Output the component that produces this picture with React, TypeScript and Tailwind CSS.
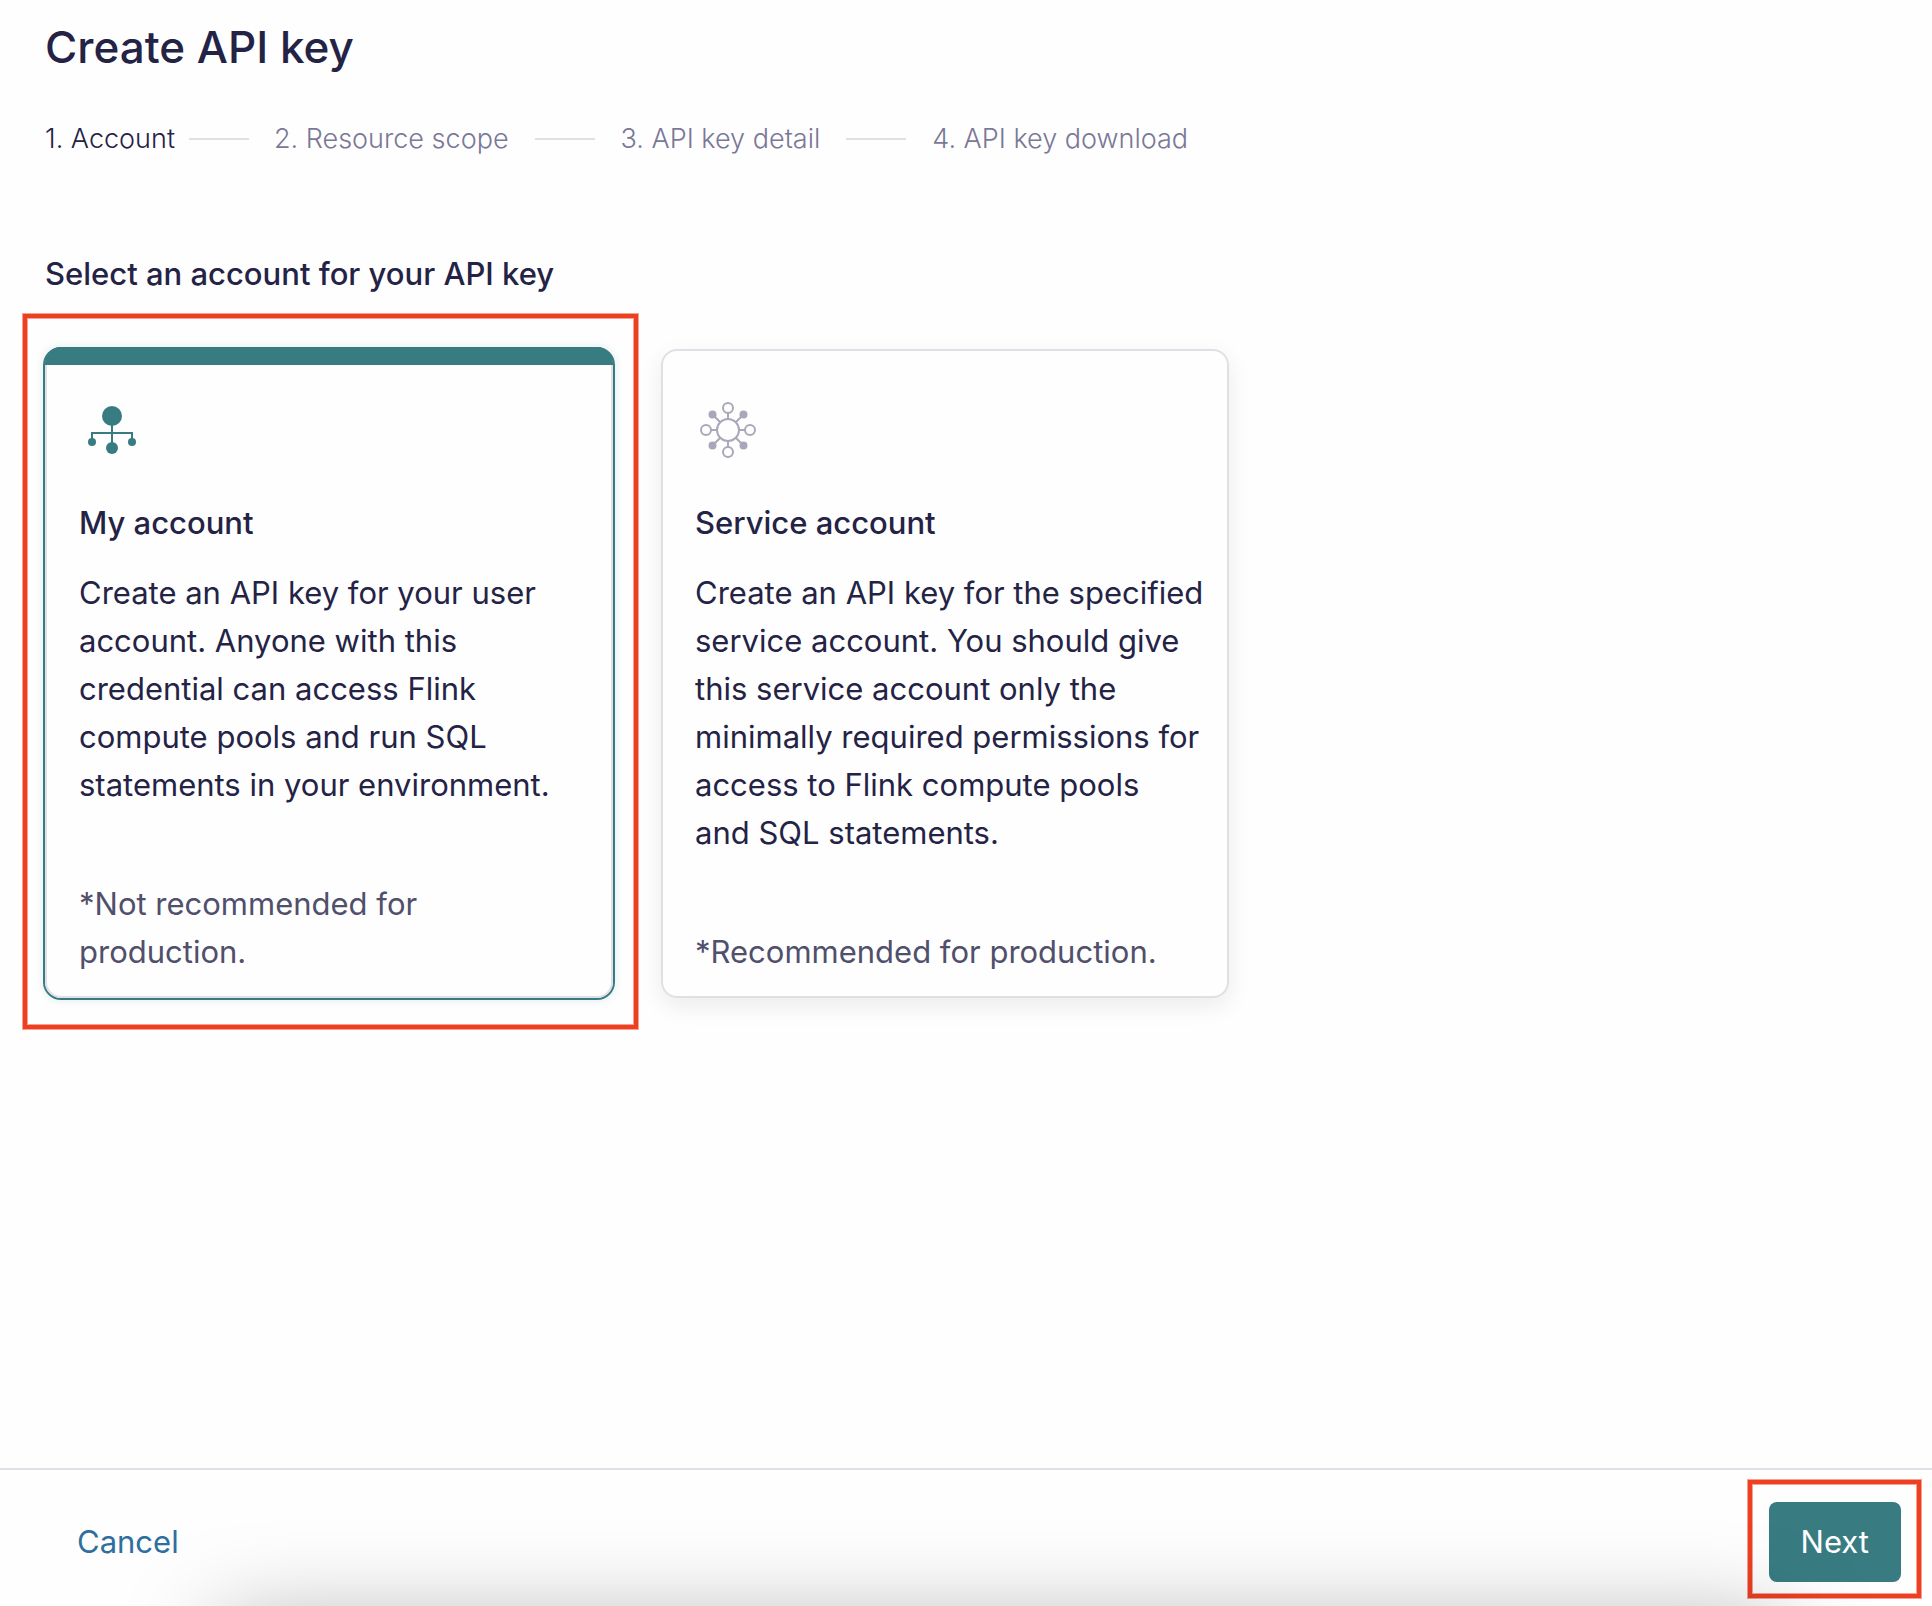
import { useState } from "react";
import type { ReactNode } from "react";

const steps = ["Account", "Resource scope", "API key detail", "API key download"];

function UserAccountIcon() {
  return (
    <svg viewBox="0 0 64 64" className="size-16" fill="#387c82" stroke="#387c82" strokeWidth="2" aria-hidden="true">
      <path d="M33 18V50M13 42V34H53V42" fill="none" />
      <circle cx="33" cy="17" r="10" stroke="none" />
      <circle cx="33" cy="49" r="6" stroke="none" />
      <circle cx="13" cy="43" r="4" stroke="none" />
      <circle cx="53" cy="43" r="4" stroke="none" />
    </svg>
  );
}

function ServiceAccountIcon() {
  return (
    <svg viewBox="0 0 64 64" className="size-16" fill="none" stroke="#a9a8ba" strokeWidth="2" aria-hidden="true">
      <circle cx="33" cy="31" r="11" />
      <circle cx="33" cy="9" r="5" />
      <circle cx="33" cy="53" r="5" />
      <circle cx="11" cy="31" r="5" />
      <circle cx="55" cy="31" r="5" />
      <path d="M33 14V20M33 42V48M16 31H22M44 31H50M18 16L25.500 23.500M48 16L40.500 23.500M18 46L25.500 38.500M48 46L40.500 38.500" />
      <g fill="#a9a8ba" stroke="none">
        <circle cx="17.500" cy="15.500" r="4" />
        <circle cx="48.500" cy="15.500" r="4" />
        <circle cx="17.500" cy="46.500" r="4" />
        <circle cx="48.500" cy="46.500" r="4" />
      </g>
    </svg>
  );
}

function Highlight({ className }: { className: string }) {
  return (
    <div
      aria-hidden="true"
      className={`pointer-events-none absolute border-4 border-[#ed4023] shadow-[0_0_0_1px_#f6a191,inset_0_0_0_1px_#f6a191] ${className}`}
    />
  );
}

type CardProps = {
  value: string;
  title: string;
  text: string;
  note: string;
  icon: ReactNode;
  selected: boolean;
  onSelect: (value: string) => void;
};

function AccountCard({ value, title, text, note, icon, selected, onSelect }: CardProps) {
  return (
    <label
      className={`relative flex h-full cursor-pointer flex-col rounded-2xl border-2 border-[#e0dfe6] pt-12 pr-5 pb-5 pl-8 ${
        selected
          ? "shadow-[0_0_0_2px_#387c82,0_0_8px_2px_rgba(56,124,130,0.15)]"
          : "shadow-[0_8px_24px_rgba(0,0,0,0.08)]"
      }`}
    >
      {selected && <span className="absolute -inset-x-0.5 -top-1 h-[18px] rounded-t-2xl bg-[#387c82]" />}
      <input
        type="radio"
        name="account"
        value={value}
        checked={selected}
        onChange={() => onSelect(value)}
        className="sr-only"
      />
      {icon}
      <span className="mt-9 font-medium">{title}</span>
      <span className="mt-[22px]">{text}</span>
      <span className="mt-[71px] text-[#504f6c]">{note}</span>
    </label>
  );
}

export default function App() {
  const [account, setAccount] = useState("user");

  return (
    <div className="flex min-h-screen flex-col bg-[#fefefe] font-['Inter',sans-serif] text-[31px] leading-[48px] text-[#242346]">
      <main className="flex-1 px-[45px] pt-[19px]">
        <h1 className="text-[44px] leading-14 font-medium">Create API key</h1>
        <ol className="mt-11 flex items-center text-[27px] leading-10 font-light">
          {steps.map((step, i) => (
            <li
              key={step}
              aria-current={i === 0 ? "step" : undefined}
              className={i === 0 ? "flex items-center" : "flex items-center text-[#7a7896]"}
            >
              {i > 0 && (
                <span
                  className={i === 1 ? "mr-[25px] ml-[14px] h-0.5 w-15 bg-[#e0dfe6]" : "mx-[26px] h-0.5 w-15 bg-[#e0dfe6]"}
                />
              )}
              {i + 1}. {step}
            </li>
          ))}
        </ol>
        <fieldset className="mt-[91px]">
          <legend className="font-medium">Select an account for your API key</legend>
          <div className="mt-[51px] grid max-w-[1184px] grid-cols-2 gap-12">
            <div className="relative">
              <AccountCard
                value="user"
                title="My account"
                text="Create an API key for your user account. Anyone with this credential can access Flink compute pools and run SQL statements in your environment."
                note="*Not recommended for production."
                icon={<UserAccountIcon />}
                selected={account === "user"}
                onSelect={setAccount}
              />
              <Highlight className="-top-[35px] -right-[25px] -bottom-[31px] -left-[22px]" />
            </div>
            <AccountCard
              value="service"
              title="Service account"
              text={"Create an API key for the specified service account. You should give this service account only the minimally required permissions for access to Flink compute pools and\u00a0SQL statements."}
              note="*Recommended for production."
              icon={<ServiceAccountIcon />}
              selected={account === "service"}
              onSelect={setAccount}
            />
          </div>
        </fieldset>
      </main>
      <footer className="relative flex items-center justify-between overflow-hidden border-t-2 border-[#e0dfe6] pt-8 pr-[31px] pb-6 pl-[77px]">
        <button type="button" className="cursor-pointer text-[#2e6f9e]">
          Cancel
        </button>
        <div className="relative">
          <button type="button" className="h-20 cursor-pointer rounded-lg bg-[#387c82] px-8 text-white">
            Next
          </button>
          <Highlight className="-top-[22px] -right-5 -bottom-4 -left-[21px]" />
        </div>
        <div
          aria-hidden="true"
          className="pointer-events-none absolute top-full right-[150px] left-[220px] mt-5 h-20 shadow-[0_0_96px_rgba(0,0,0,0.34)]"
        />
      </footer>
    </div>
  );
}
